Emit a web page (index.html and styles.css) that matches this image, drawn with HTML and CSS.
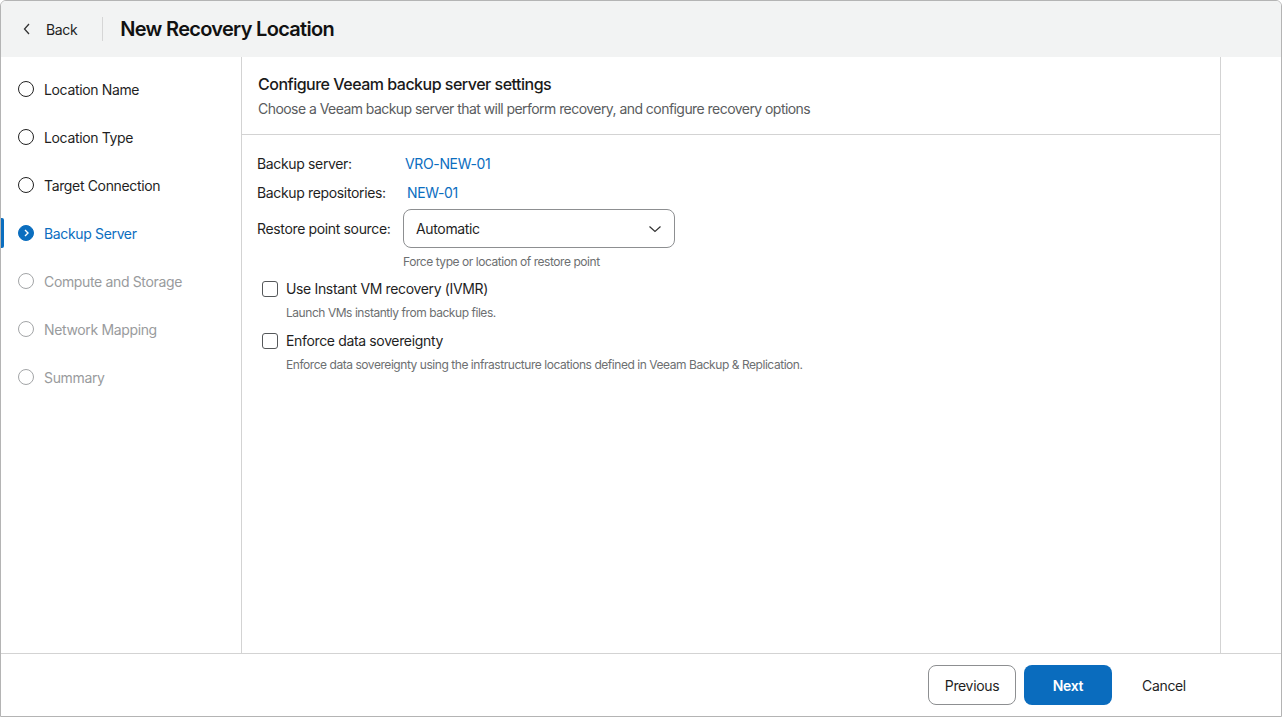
FILE: index.html
```html
<!DOCTYPE html>
<html lang="en">
<head>
    <meta charset="UTF-8">
    <meta name="viewport" content="width=device-width, initial-scale=1.0">
    <title>New Recovery Location</title>
    <link rel="stylesheet" href="styles.css">
</head>
<body>
    <div class="wizard">
        <div class="wizard-header">
            <a class="back-link" href="#">
                <svg width="10" height="14" viewBox="0 0 10 14"><path d="M7 2 L2.5 7 L7 12" fill="none" stroke="#333" stroke-width="1.3"/></svg>
                <span>Back</span>
            </a>
            <span class="header-sep"></span>
            <h1>New Recovery Location</h1>
        </div>

        <div class="wizard-body">
            <ul class="steps">
                <li class="step"><span class="step-dot"></span>Location Name</li>
                <li class="step"><span class="step-dot"></span>Location Type</li>
                <li class="step"><span class="step-dot"></span>Target Connection</li>
                <li class="step active">
                    <span class="step-dot">
                        <svg width="16" height="16" viewBox="0 0 16 16"><path d="M7 5 L10 8 L7 11" fill="none" stroke="#fff" stroke-width="1.4"/></svg>
                    </span>Backup Server</li>
                <li class="step pending"><span class="step-dot"></span>Compute and Storage</li>
                <li class="step pending"><span class="step-dot"></span>Network Mapping</li>
                <li class="step pending"><span class="step-dot"></span>Summary</li>
            </ul>

            <div class="content">
                <div class="content-head">
                    <h2>Configure Veeam backup server settings</h2>
                    <p>Choose a Veeam backup server that will perform recovery, and configure recovery options</p>
                </div>

                <div class="form">
                    <div class="row">
                        <span class="label">Backup server:</span>
                        <a class="value" href="#">VRO-NEW-01</a>
                    </div>
                    <div class="row">
                        <span class="label">Backup repositories:</span>
                        <a class="value value-2" href="#">NEW-01</a>
                    </div>
                    <div class="row row-select">
                        <span class="label">Restore point source:</span>
                        <div class="select-wrap">
                            <div class="select">
                                <span>Automatic</span>
                                <svg width="14" height="14" viewBox="0 0 14 14"><path d="M1.5 4.5 L7 9.5 L12.5 4.5" fill="none" stroke="#333" stroke-width="1.2"/></svg>
                            </div>
                            <div class="hint">Force type or location of restore point</div>
                        </div>
                    </div>

                    <div class="check">
                        <label><span class="box"></span>Use Instant VM recovery (IVMR)</label>
                        <div class="hint">Launch VMs instantly from backup files.</div>
                    </div>
                    <div class="check">
                        <label><span class="box"></span>Enforce data sovereignty</label>
                        <div class="hint">Enforce data sovereignty using the infrastructure locations defined in Veeam Backup &amp; Replication.</div>
                    </div>
                </div>
            </div>

            <div class="side-gap"></div>
        </div>

        <div class="wizard-footer">
            <button class="btn btn-outline">Previous</button>
            <button class="btn btn-primary">Next</button>
            <button class="btn btn-plain">Cancel</button>
        </div>
    </div>
</body>
</html>
```

FILE: styles.css
```css
* {
    box-sizing: border-box;
}
body {
    margin: 0;
    font-family: Inter, "Noto Sans", Arial, sans-serif;
    color: #1f1f1f;
    background-color: #ffffff;
    letter-spacing: -0.35px;
}
.wizard {
    width: 1282px;
    height: 717px;
    display: flex;
    flex-direction: column;
    border: 1px solid #b4b4b4;
    border-radius: 6px 6px 0 0;
    overflow: hidden;
}
.wizard-header {
    height: 56px;
    flex: none;
    display: flex;
    align-items: center;
    background-color: #f2f3f3;
    padding-left: 21px;
}
.back-link {
    display: flex;
    align-items: center;
    gap: 14px;
    color: #1f1f1f;
    text-decoration: none;
    font-size: 14px;
}
.header-sep {
    width: 1px;
    height: 24px;
    background-color: #d6d6d6;
    margin: 0 17px 0 25px;
}
h1 {
    margin: 0;
    font-size: 20px;
    font-weight: 600;
    letter-spacing: -0.7px;
    color: #111;
}
.wizard-body {
    flex: 1;
    display: flex;
    min-height: 0;
}
.steps {
    list-style: none;
    margin: 0;
    padding: 8px 0 0 0;
    width: 241px;
    flex: none;
    border-right: 1px solid #d3d3d3;
}
.step {
    position: relative;
    height: 48px;
    display: flex;
    align-items: center;
    gap: 10px;
    padding-left: 17px;
    font-size: 14px;
    color: #1f1f1f;
}
.step-dot {
    width: 16px;
    height: 16px;
    border-radius: 50%;
    border: 1.5px solid #222;
    display: flex;
    align-items: center;
    justify-content: center;
}
.step.active {
    color: #0b6ebf;
}
.step.active::before {
    content: "";
    position: absolute;
    left: 0;
    top: 9px;
    width: 3px;
    height: 30px;
    background-color: #0b6ebf;
    border-radius: 0 2px 2px 0;
}
.step.active .step-dot {
    background-color: #0b6ebf;
    border-color: #0b6ebf;
}
.step.active .step-dot svg {
    flex: none;
}
.step.pending {
    color: #999b9d;
}
.step.pending .step-dot {
    border-color: #a3a5a7;
}
.content {
    width: 979px;
    flex: none;
    border-right: 1px solid #d3d3d3;
}
.content-head {
    padding: 17px 16px 17px 16px;
    border-bottom: 1px solid #d3d3d3;
}
h2 {
    margin: 0;
    font-size: 16px;
    font-weight: 500;
    letter-spacing: -0.5px;
    color: #1a1a1a;
}
.content-head p {
    margin: 6px 0 0 0;
    font-size: 14px;
    letter-spacing: -0.55px;
    color: #5a5c5e;
}
.form {
    padding: 14px 15px;
    font-size: 14px;
}
.row {
    display: flex;
    align-items: center;
    height: 29px;
}
.label {
    width: 148px;
    flex: none;
}
.value {
    color: #0b6ebf;
    text-decoration: none;
}
.value-2 {
    margin-left: 2px;
}
.row-select {
    height: auto;
    align-items: flex-start;
    margin-top: 2px;
}
.row-select .label {
    margin-top: 11px;
    width: 146px;
}
.select {
    width: 272px;
    height: 39px;
    border: 1px solid #8d8f91;
    border-radius: 8px;
    display: flex;
    align-items: center;
    justify-content: space-between;
    padding: 0 12px 0 12px;
    color: #1f1f1f;
}
.hint {
    font-size: 12px;
    letter-spacing: -0.45px;
    color: #6d6f71;
    margin-top: 6px;
}
.check {
    margin-top: 11px;
    padding-left: 5px;
}
.check + .check {
    margin-top: 12px;
}
.check label {
    display: flex;
    align-items: center;
    gap: 8px;
}
.check .hint {
    margin-left: 24px;
    margin-top: 8px;
}
.box {
    width: 16px;
    height: 16px;
    border: 1.5px solid #55585a;
    border-radius: 3px;
}
.side-gap {
    flex: 1;
}
.wizard-footer {
    height: 63px;
    flex: none;
    border-top: 1px solid #d3d3d3;
    display: flex;
    align-items: center;
    justify-content: flex-end;
    gap: 8px;
    padding-right: 73px;
}
.btn {
    width: 88px;
    height: 40px;
    border-radius: 8px;
    font-family: inherit;
    font-size: 14px;
    letter-spacing: -0.35px;
    cursor: pointer;
}
.btn-outline {
    background-color: #ffffff;
    border: 1px solid #8d8f91;
    color: #1f1f1f;
}
.btn-primary {
    background-color: #0a6cbe;
    border: none;
    color: #ffffff;
    font-weight: 600;
}
.btn-plain {
    background: none;
    border: none;
    color: #1f1f1f;
}
```
